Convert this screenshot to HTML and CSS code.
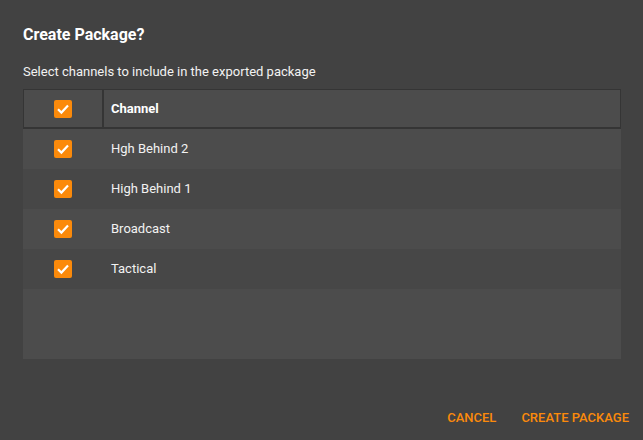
FILE: index.html
```html
<!DOCTYPE html>
<html lang="en">
<head>
  <meta charset="UTF-8" />
  <meta name="viewport" content="width=device-width, initial-scale=1" />
  <title>Create Package</title>
  <link rel="stylesheet" href="styles.css">
</head>
<body>

  <div class="dialog">
    <h2 class="dialog-title">Create Package?</h2>
    <p class="dialog-text">Select channels to include in the exported package</p>

    <div class="channel-table">
      <div class="table-head">
        <div class="cell-check">
          <span class="checkbox checked">
            <svg viewBox="0 0 18 18"><path d="M4 9.3 L7.4 12.6 L14 5.6" /></svg>
          </span>
        </div>
        <div class="cell-name">Channel</div>
      </div>

      <div class="table-row">
        <div class="cell-check">
          <span class="checkbox checked">
            <svg viewBox="0 0 18 18"><path d="M4 9.3 L7.4 12.6 L14 5.6" /></svg>
          </span>
        </div>
        <div class="cell-name">Hgh Behind 2</div>
      </div>
      <div class="table-row">
        <div class="cell-check">
          <span class="checkbox checked">
            <svg viewBox="0 0 18 18"><path d="M4 9.3 L7.4 12.6 L14 5.6" /></svg>
          </span>
        </div>
        <div class="cell-name">High Behind 1</div>
      </div>
      <div class="table-row">
        <div class="cell-check">
          <span class="checkbox checked">
            <svg viewBox="0 0 18 18"><path d="M4 9.3 L7.4 12.6 L14 5.6" /></svg>
          </span>
        </div>
        <div class="cell-name">Broadcast</div>
      </div>
      <div class="table-row">
        <div class="cell-check">
          <span class="checkbox checked">
            <svg viewBox="0 0 18 18"><path d="M4 9.3 L7.4 12.6 L14 5.6" /></svg>
          </span>
        </div>
        <div class="cell-name">Tactical</div>
      </div>

      <div class="table-filler"></div>
    </div>

    <div class="dialog-actions">
      <button class="btn-text">Cancel</button>
      <button class="btn-text">Create Package</button>
    </div>
  </div>

</body>
</html>
```

FILE: styles.css
```css
/* Base */
* {
  box-sizing: border-box;
}
body {
  margin: 0;
  background: #424242;
  font-family: Roboto, 'Liberation Sans', sans-serif;
  color: #f2f2f2;
}

.dialog {
  padding: 25px 0 0 23px;
}

.dialog-title {
  margin: 0;
  font-size: 16px;
  line-height: 20px;
  font-weight: 700;
  color: #fff;
}

.dialog-text {
  margin: 19px 0 0;
  font-size: 13px;
  line-height: 16px;
}

/* Channel table */
.channel-table {
  margin-top: 9px;
  width: 598px;
  background: #4c4c4c;
}

.table-head {
  display: flex;
  height: 40px;
  border: 1px solid #353535;
  border-bottom-width: 2px;
  background: #4c4c4c;
}

.table-head .cell-check {
  width: 80px;
  padding-right: 1px;
  border-right: 2px solid #353535;
}

.table-head .cell-name {
  padding-left: 7px;
  font-weight: 700;
  color: #fff;
}

.table-row {
  display: flex;
  height: 40px;
}

.table-row:nth-of-type(odd) {
  background: #474747;
}

.table-row .cell-check {
  width: 80px;
  padding-right: 1px;
}

.table-row .cell-name {
  padding: 0 0 1px 8px;
}

.cell-check {
  display: flex;
  align-items: center;
  justify-content: center;
}

.cell-name {
  display: flex;
  align-items: center;
  font-size: 13px;
}

.table-filler {
  height: 70px;
}

/* Checkbox */
.checkbox {
  display: block;
  width: 18px;
  height: 18px;
  border-radius: 2px;
  background: #fb8a0b;
}

.checkbox svg {
  display: block;
  width: 18px;
  height: 18px;
}

.checkbox path {
  fill: none;
  stroke: #fff;
  stroke-width: 2.2;
}

/* Footer buttons */
.dialog-actions {
  display: flex;
  justify-content: flex-end;
  gap: 25px;
  margin-top: 51px;
  padding-right: 14px;
}

.btn-text {
  padding: 0;
  border: none;
  background: none;
  font-family: inherit;
  font-size: 13px;
  line-height: 16px;
  font-weight: 500;
  text-transform: uppercase;
  color: #fb8a0b;
  cursor: pointer;
}
```
